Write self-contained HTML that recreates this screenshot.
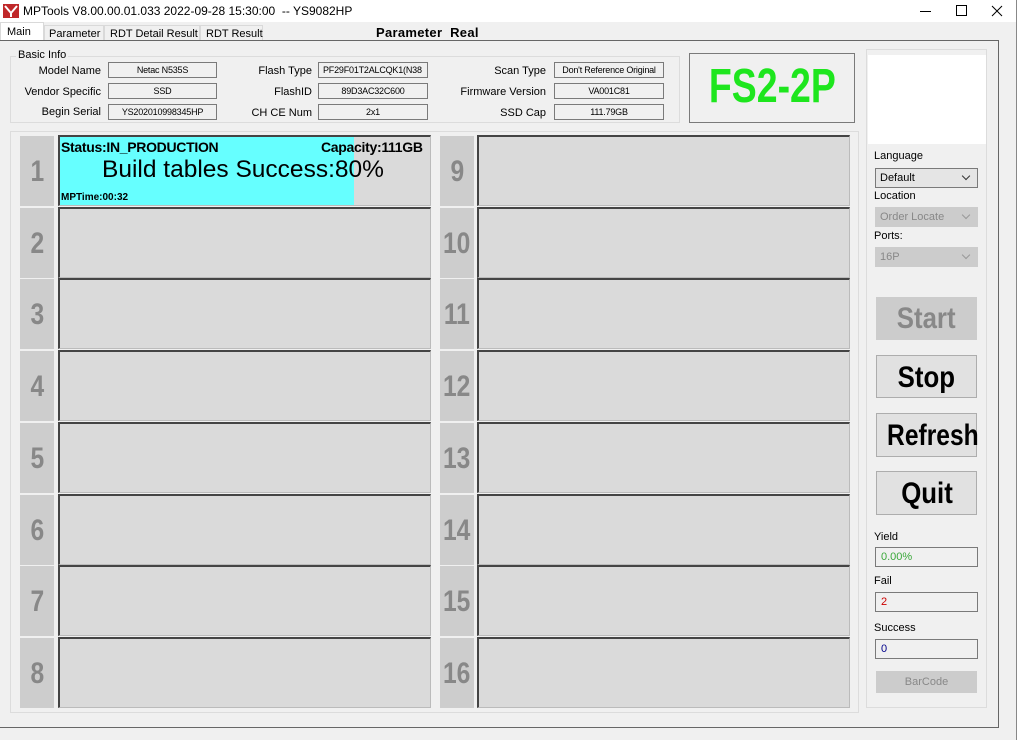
<!DOCTYPE html>
<html><head><meta charset="utf-8"><style>
*{box-sizing:border-box;margin:0;padding:0}
body{width:1021px;height:740px;background:#fff;position:relative;overflow:hidden;font-family:"Liberation Sans",sans-serif;font-size:11px;color:#000}
.a{position:absolute}
.win{left:0;top:0;width:1017px;height:740px;background:#f0f0f0;border-right:1px solid #888}
.tb{left:0;top:0;width:1016px;height:22px;background:#fff}
.lbl{position:absolute;text-align:right;font-size:11px}
.fld{position:absolute;border:1px solid #7a7a7a;background:#f0f0f0;font-size:9px;text-align:center;line-height:14px;height:16px;overflow:hidden;white-space:nowrap;letter-spacing:-0.2px}
.num{position:absolute;width:34px;height:70px;background:#cdcdcd;color:#888;font-weight:bold;font-size:30px;text-align:center;line-height:72px}
.num span{display:inline-block;transform:scaleX(0.82)}
.slot{position:absolute;height:71px;background:#dadada;border-top:2px solid #444;border-left:2px solid #444;border-right:1px solid #bbb;border-bottom:1px solid #bbb}
.btn{position:absolute;left:876px;width:101px;background:#e1e1e1;border:1px solid #adadad;font-weight:bold;text-align:center;font-size:30px;white-space:nowrap}
.btn span{display:inline-block;transform:scaleX(0.86)}
.sbox{position:absolute;left:875px;width:103px;height:20px;border:1px solid #7a7a7a;background:#f0f0f0;font-size:11px;padding-left:5px;line-height:18px}
.sl{position:absolute;left:874px;font-size:11px}
.cb{position:absolute;left:875px;width:103px;height:20px;border:1px solid #7a7a7a;background:#e5e5e5;font-size:11px;padding-left:4px;line-height:18px}
.cb.d{border-color:#ccc;background:#ccc;color:#888}
.cb::after{content:"";position:absolute;right:8px;top:4px;width:5px;height:5px;border-right:1px solid #333;border-bottom:1px solid #333;transform:rotate(45deg)}
.cb.d::after{border-color:#999}
.tab{position:absolute;border:1px solid #d9d9d9;border-bottom:none;font-size:11px;white-space:nowrap}
</style></head><body>
<div class="a win"></div>
<div class="a tb"></div>
<svg class="a" style="left:3px;top:4px" width="16" height="14"><rect width="16" height="14" fill="#c0282a"/><path d="M2 2 L8 9 L14 2 M8 9 V13" stroke="#fff" stroke-width="2" fill="none"/></svg>
<div class="a" style="left:23px;top:4px;font-size:12px">MPTools V8.00.00.01.033 2022-09-28 15:30:00&nbsp; -- YS9082HP</div>
<div class="a" style="left:920px;top:11px;width:11px;border-top:1px solid #000"></div>
<div class="a" style="left:956px;top:5px;width:11px;height:11px;border:1px solid #000"></div>
<svg class="a" style="left:991px;top:5px" width="12" height="12"><path d="M1 1L11 11M11 1L1 11" stroke="#000" stroke-width="1"/></svg>
<!-- tabs -->
<div class="tab" style="left:0;top:22px;width:44px;height:19px;background:#fff;padding:3px 0 0 6px">Main</div>
<div class="tab" style="left:44px;top:25px;width:60px;height:15px;padding:2px 0 0 4px">Parameter</div>
<div class="tab" style="left:104px;top:25px;width:96px;height:15px;padding:2px 0 0 5px">RDT Detail Result</div>
<div class="tab" style="left:200px;top:25px;width:63px;height:15px;padding:2px 0 0 5px">RDT Result</div>
<div class="a" style="left:376px;top:25px;font-size:13px;font-weight:bold;letter-spacing:0.3px">Parameter&nbsp; Real</div>
<div class="a" style="left:0;top:40px;width:999px;height:688px;border:1px solid #666;border-left:none"></div>
<!-- basic info -->
<div class="a" style="left:10px;top:56px;width:670px;height:67px;border:1px solid #dcdcdc"></div>
<div class="a" style="left:16px;top:49px;background:#f0f0f0;padding:0 2px">Basic Info</div>
<div class="lbl" style="left:0;width:101px;top:65px">Model Name</div>
<div class="lbl" style="left:0;width:101px;top:86px">Vendor Specific</div>
<div class="lbl" style="left:0;width:101px;top:106px">Begin Serial</div>
<div class="fld" style="left:108px;top:62px;width:109px">Netac N535S</div>
<div class="fld" style="left:108px;top:83px;width:109px">SSD</div>
<div class="fld" style="left:108px;top:104px;width:109px">YS202010998345HP</div>
<div class="lbl" style="left:200px;width:112px;top:65px">Flash Type</div>
<div class="lbl" style="left:200px;width:112px;top:86px">FlashID</div>
<div class="lbl" style="left:200px;width:112px;top:107px">CH CE Num</div>
<div class="fld" style="left:318px;top:62px;width:110px;text-align:left;padding-left:4px">PF29F01T2ALCQK1(N38</div>
<div class="fld" style="left:318px;top:83px;width:110px">89D3AC32C600</div>
<div class="fld" style="left:318px;top:104px;width:110px">2x1</div>
<div class="lbl" style="left:440px;width:106px;top:65px">Scan Type</div>
<div class="lbl" style="left:440px;width:106px;top:86px">Firmware Version</div>
<div class="lbl" style="left:440px;width:106px;top:107px">SSD Cap</div>
<div class="fld" style="left:554px;top:62px;width:110px">Don't Reference Original</div>
<div class="fld" style="left:554px;top:83px;width:110px">VA001C81</div>
<div class="fld" style="left:554px;top:104px;width:110px">111.79GB</div>
<div class="a" style="left:689px;top:53px;width:166px;height:70px;border:1px solid #7a7a7a;color:#1ee61e;font-weight:bold;font-size:48px;text-align:center;line-height:66px"><span style="display:inline-block;transform:scaleX(0.78)">FS2-2P</span></div>
<!-- right panel -->
<div class="a" style="left:866px;top:49px;width:121px;height:659px;border:1px solid #dcdcdc"></div>
<div class="a" style="left:868px;top:55px;width:118px;height:89px;background:#fff"></div>
<div class="sl" style="top:150px">Language</div>
<div class="cb" style="top:168px">Default</div>
<div class="sl" style="top:190px">Location</div>
<div class="cb d" style="top:207px">Order Locate</div>
<div class="sl" style="top:230px">Ports:</div>
<div class="cb d" style="top:247px">16P</div>
<div class="btn" style="top:297px;height:43px;line-height:42px;background:#ccc;border-color:#ccc;color:#888"><span>Start</span></div>
<div class="btn" style="top:355px;height:43px;line-height:44px"><span>Stop</span></div>
<div class="btn" style="top:413px;height:44px;line-height:44px"><span style="transform:scaleX(0.82)">Refresh</span></div>
<div class="btn" style="top:471px;height:44px;line-height:44px"><span>Quit</span></div>
<div class="sl" style="top:531px">Yield</div>
<div class="sbox" style="top:547px;color:#3aa83a">0.00%</div>
<div class="sl" style="top:575px">Fail</div>
<div class="sbox" style="top:592px;color:#c00">2</div>
<div class="sl" style="top:622px">Success</div>
<div class="sbox" style="top:639px;color:#00008b">0</div>
<div class="a" style="left:876px;top:671px;width:101px;height:22px;background:#ccc;border:1px solid #ccc;color:#888;text-align:center;line-height:20px;font-size:11px">BarCode</div>
<!-- slots -->
<div class="a" style="left:10px;top:131px;width:849px;height:582px;border:1px solid #dcdcdc"></div>
<div id="slots"></div>
<script>
var h='';for(var i=0;i<8;i++){var t=136+Math.round(i*71.7);
h+='<div class="num" style="left:20px;top:'+t+'px"><span>'+(i+1)+'</span></div>';
h+='<div class="slot" style="left:58px;top:'+(t-1)+'px;width:373px"></div>';
h+='<div class="num" style="left:440px;top:'+t+'px"><span>'+(i+9)+'</span></div>';
h+='<div class="slot" style="left:477px;top:'+(t-1)+'px;width:373px"></div>';}
document.getElementById('slots').innerHTML=h;
</script>
<div class="a" style="left:60px;top:137px;width:294px;height:68px;background:#66ffff"></div>
<div class="a" style="left:61px;top:139px;font-size:14px;font-weight:bold;letter-spacing:-0.3px">Status:IN_PRODUCTION</div>
<div class="a" style="left:321px;top:139px;font-size:14px;font-weight:bold;letter-spacing:-0.3px">Capacity:111GB</div>
<div class="a" style="left:102px;top:156px;font-size:24.5px">Build tables Success:80%</div>
<div class="a" style="left:61px;top:192px;font-size:10px;font-weight:bold">MPTime:00:32</div>
</body></html>
